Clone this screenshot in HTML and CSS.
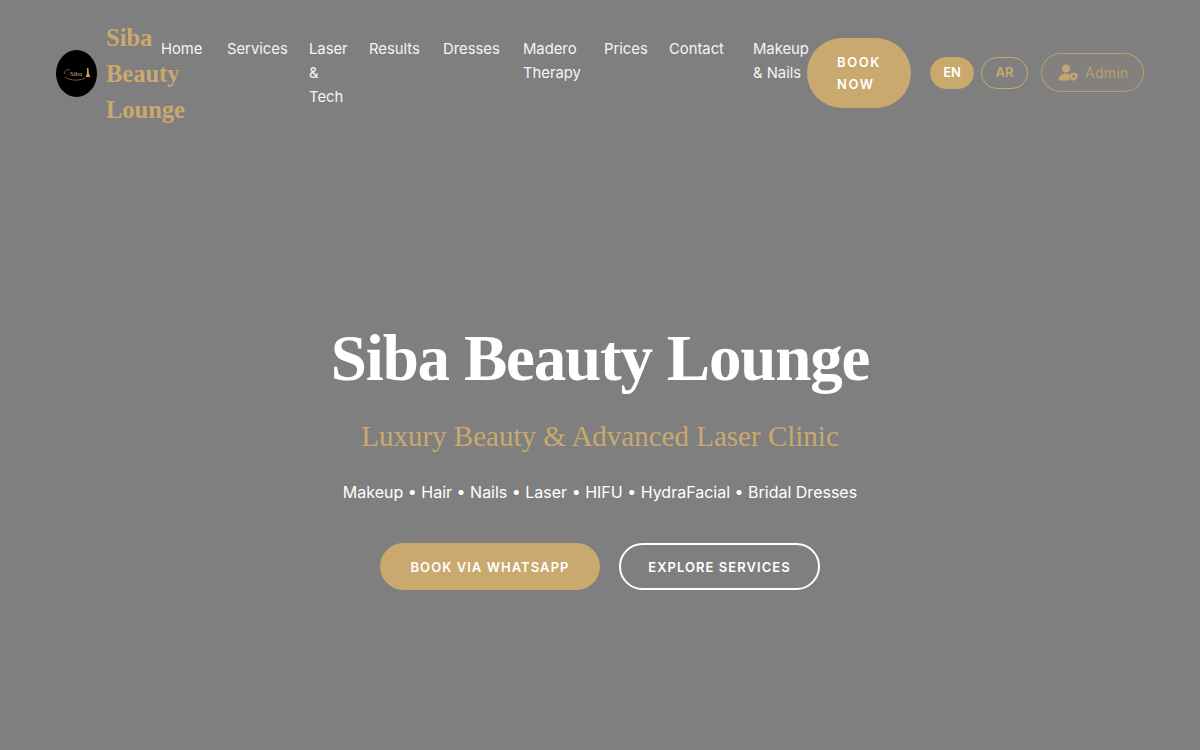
FILE: index.html
```html
<!DOCTYPE html>
<html lang="en">
<head>
    <meta charset="UTF-8">
    <meta name="viewport" content="width=device-width, initial-scale=1.0">
    <title>Siba Beauty Lounge</title>
    <link rel="stylesheet" href="styles.css">
</head>
<body>
    <header class="header">
        <a class="brand" href="#">
            <span class="logo">
                <svg viewBox="0 0 41 47" width="41" height="47">
                    <ellipse cx="20.5" cy="23.5" rx="20.5" ry="23.5" fill="#000"/>
                    <path d="M8 24c1-4 4-5 6-4M9 27c5 4 14 4 20 1" fill="none" stroke="#a8813f" stroke-width=".7"/>
                    <text x="20" y="26" class="logo-text">Siba</text>
                    <path d="M31 18h1.4l.6 6 1.5 3h-5l1.4-3z" fill="#c9a25a"/>
                </svg>
            </span>
            <span class="brand-name">Siba<br>Beauty<br>Lounge</span>
        </a>
        <nav class="nav">
            <a href="#">Home</a>
            <a href="#">Services</a>
            <a href="#">Laser<br>&amp;<br>Tech</a>
            <a href="#">Results</a>
            <a href="#">Dresses</a>
            <a href="#">Madero<br>Therapy</a>
            <a href="#">Prices</a>
            <a href="#">Contact</a>
            <a href="#">Makeup<br>&amp; Nails</a>
        </nav>
        <a class="book-btn" href="#">BOOK<br>NOW</a>
        <div class="lang">
            <button class="lang-btn active">EN</button>
            <button class="lang-btn">AR</button>
        </div>
        <a class="admin" href="#">
            <svg viewBox="0 0 20 17" width="20" height="17">
                <circle cx="8" cy="4.5" r="4" fill="currentColor"/>
                <path d="M0.5 16.500c0-4.500 3-7 7-7 1.600 0 3 .4 4 1.100v5.900z" fill="currentColor"/>
                <path d="M15.500 8.500l4 1.400v2.400c0 2.200-1.700 3.700-4 4.500-2.300-.8-4-2.300-4-4.500v-2.400z" fill="currentColor"/>
                <circle cx="15.500" cy="12.300" r="1.200" fill="#7f7f7f"/>
            </svg>
            <span>Admin</span>
        </a>
    </header>

    <section class="hero">
        <h1>Siba Beauty Lounge</h1>
        <h2>Luxury Beauty &amp; Advanced Laser Clinic</h2>
        <p>Makeup • Hair • Nails • Laser • HIFU • HydraFacial • Bridal Dresses</p>
        <div class="hero-actions">
            <a class="btn btn-gold" href="#">BOOK VIA WHATSAPP</a>
            <a class="btn btn-outline" href="#">EXPLORE SERVICES</a>
        </div>
    </section>
</body>
</html>
```

FILE: styles.css
```css
* {
    margin: 0;
    padding: 0;
    box-sizing: border-box;
}

body {
    background-color: #7f7f7f;
    font-family: 'Inter', 'Open Sans', sans-serif;
    color: #fff;
    height: 750px;
    overflow: hidden;
}

a {
    color: inherit;
    text-decoration: none;
}

.header {
    display: flex;
    align-items: center;
    padding: 19px 56px 0;
}

.brand {
    display: flex;
    align-items: center;
    gap: 9px;
    width: 105px;
    flex-shrink: 0;
}

.logo {
    display: flex;
    flex-shrink: 0;
}

.logo-text {
    font-family: 'Liberation Serif', serif;
    font-size: 7px;
    fill: #d8b878;
    text-anchor: middle;
}

.brand-name {
    padding-top: 1px;
    margin-bottom: -1px;
    font-family: 'Liberation Serif', serif;
    font-size: 24.5px;
    font-weight: 700;
    line-height: 36px;
    color: #c9a96e;
}

.nav {
    display: grid;
    grid-template-columns: 66px 82px 60px 74px 80px 81px 65px 84px 54px;
    width: 646px;
    flex-shrink: 0;
    font-size: 14.8px;
    line-height: 24px;
    color: #f5f5f5;
    height: 72px;
    white-space: nowrap;
}

.book-btn {
    width: 104px;
    height: 70px;
    padding: 13px 0 0 30px;
    border-radius: 35px;
    background-color: #c9a96e;
    font-size: 13px;
    font-weight: 600;
    line-height: 22px;
    letter-spacing: 1.6px;
    flex-shrink: 0;
}

.lang {
    display: flex;
    gap: 7px;
    margin-left: 19px;
}

.lang-btn {
    height: 32px;
    width: 47px;
    padding-bottom: 2px;
    border: 1px solid #c9a96e;
    border-radius: 16px;
    background: none;
    color: #c9a96e;
    font-family: inherit;
    font-size: 13px;
    font-weight: 600;
}

.lang-btn.active {
    width: 44px;
    background-color: #c9a96e;
    color: #fff;
}

.admin {
    display: flex;
    align-items: center;
    gap: 7px;
    height: 39px;
    width: 103px;
    margin-top: -1px;
    margin-left: 13px;
    padding-left: 16px;
    border: 1px solid rgba(201, 169, 110, 0.7);
    border-radius: 20px;
    background-color: rgba(201, 169, 110, 0.06);
    color: #c2a56f;
    font-size: 14px;
    letter-spacing: 0.3px;
}

.admin span {
    padding-bottom: 1px;
    opacity: 0.85;
}

.hero {
    display: flex;
    flex-direction: column;
    align-items: center;
    padding-top: 192px;
    text-align: center;
}

.hero h1 {
    font-family: 'Liberation Serif', serif;
    font-size: 65px;
    font-weight: 700;
    line-height: 78px;
    letter-spacing: -1.2px;
}

.hero h2 {
    margin-top: 20px;
    font-family: 'Liberation Serif', serif;
    font-size: 29px;
    font-weight: 400;
    line-height: 38px;
    color: #c9a96e;
}

.hero p {
    margin-top: 24px;
    font-size: 16px;
    line-height: 26px;
}

.hero-actions {
    display: flex;
    gap: 19px;
    margin-top: 38px;
}

.btn {
    display: flex;
    align-items: center;
    justify-content: center;
    height: 47px;
    border-radius: 24px;
    font-size: 13px;
    font-weight: 600;
    letter-spacing: 1.05px;
}

.btn-gold {
    width: 220px;
    background-color: #c9a96e;
}

.btn-outline {
    width: 201px;
    border: 2px solid #fff;
}
```
